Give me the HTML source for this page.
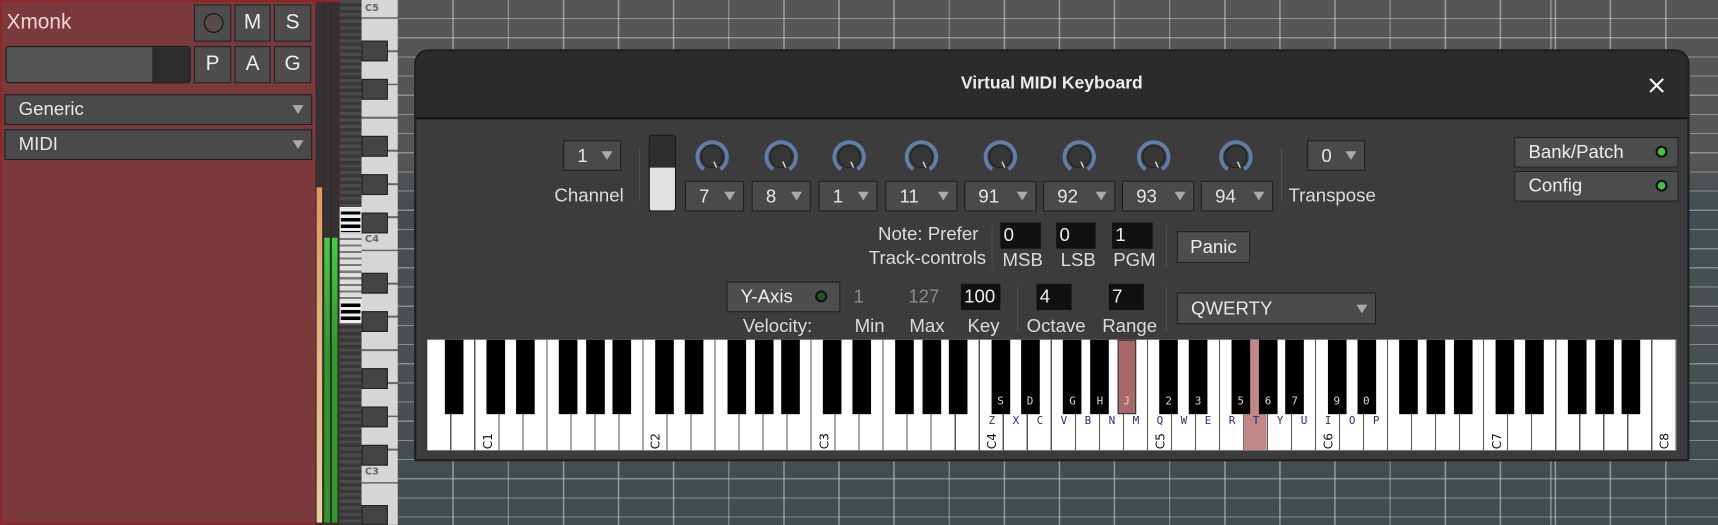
<!DOCTYPE html>
<html><head><meta charset="utf-8">
<style>
*{box-sizing:border-box;margin:0;padding:0}
html,body{width:1718px;height:525px;overflow:hidden;background:#4a5053}
#w{position:absolute;left:0;top:0;width:1568px;height:479px;transform:scale(1.09566);transform-origin:0 0;font-family:"Liberation Sans","DejaVu Sans",sans-serif;color:#e2e2e2}
.a{position:absolute}
#grid{left:363px;top:0;width:1205px;height:479px;
background:
repeating-linear-gradient(90deg,transparent 0 49px,rgba(215,215,215,.55) 49px 50.3px),
repeating-linear-gradient(180deg,transparent 0 16.4px,rgba(215,215,215,.45) 16.4px 17.5px),
linear-gradient(180deg,#555756 0,#555756 30%,#434c50 40%,#4b5153 60%,#434b4f 100%);
background-position:1px 0,0 0,0 0}
#red{left:0;top:0;width:310px;height:479px;background:#7a3a3c;border:2px solid #8e2828}
.btn{position:absolute;background:#4d4d4d;border:1px solid #222;color:#eee;font-size:19px;text-align:center;line-height:32px}
.dd{position:absolute;background:#4a4a4a;border:1px solid #1e1e1e;color:#e6e6e6;font-size:17px;padding-left:12px}
.dd:after{content:"";position:absolute;right:7px;top:50%;margin-top:-4px;border-left:5px solid transparent;border-right:5px solid transparent;border-top:8px solid #aaa}
.lbl{position:absolute;font-size:17px;color:#dcdcdc;white-space:nowrap}
.sep{position:absolute;width:1px;background:#1e1e1e;border-right:1px solid #555}
.spin{position:absolute;background:#111;color:#eee;font-size:17px;padding-left:3px;line-height:24px;height:24px}
.led{position:absolute;width:11px;height:11px;border-radius:50%;background:#3ec43e;border:2px solid #111}
.bk{position:absolute;top:0;width:17px;height:68px;background:#000}
.wl{position:absolute;top:69px;width:22px;text-align:center;font-family:"DejaVu Sans Mono","Liberation Mono",monospace;font-size:10px;color:#2a2a80}
.bl{position:absolute;top:51px;width:17px;text-align:center;font-family:"DejaVu Sans Mono","Liberation Mono",monospace;font-size:10px;color:#e8dca0}
.ol{position:absolute;top:84px;font-size:11px;color:#111;transform:rotate(-90deg);transform-origin:0 0;width:20px;font-family:"DejaVu Sans","Liberation Sans",sans-serif}
</style></head><body><div id="w">
<div class="a" id="grid"></div>
<div class="a" style="left:1415px;top:0;width:1px;height:479px;background:rgba(230,230,230,.6)"></div>

<div class="a" id="red"></div>
<div class="lbl" style="left:6px;top:10px;font-size:19px;color:#f2d6d6">Xmonk</div>
<div class="btn" style="left:177px;top:4px;width:34px;height:34px"><div class="a" style="left:8px;top:7px;width:18px;height:18px;border-radius:50%;border:1px solid #111;background:#5a4a4a"></div></div>
<div class="btn" style="left:214px;top:4px;width:33px;height:34px">M</div>
<div class="btn" style="left:250px;top:4px;width:34px;height:34px">S</div>
<div class="btn" style="left:177px;top:42px;width:34px;height:34px">P</div>
<div class="btn" style="left:214px;top:42px;width:33px;height:34px">A</div>
<div class="btn" style="left:250px;top:42px;width:34px;height:34px">G</div>
<div class="a" style="left:5px;top:42px;width:169px;height:34px;background:#555;border:1px solid #1a1a1a;border-radius:3px;overflow:hidden"><div class="a" style="left:133px;top:0;width:36px;height:34px;background:#2c2c2c"></div></div>
<div class="dd" style="left:4px;top:86px;width:281px;height:28px;line-height:26px;padding-left:12px">Generic</div>
<div class="dd" style="left:4px;top:118px;width:281px;height:28px;line-height:26px;padding-left:12px">MIDI</div>
<div class="a" style="left:288px;top:2px;width:22px;height:477px;background:#3a2a2a"></div>
<div class="a" style="left:289px;top:3px;width:5px;height:474px;background:#333"></div>
<div class="a" style="left:289px;top:171px;width:5px;height:306px;background:linear-gradient(#e09a60,#e8d0a0)"></div>
<div class="a" style="left:296px;top:3px;width:5px;height:474px;background:#333"></div>
<div class="a" style="left:296px;top:217px;width:5px;height:260px;background:linear-gradient(#40d040,#2a9a2a 40%,#2a9a2a)"></div>
<div class="a" style="left:303px;top:3px;width:5px;height:474px;background:#333"></div>
<div class="a" style="left:303px;top:217px;width:5px;height:260px;background:linear-gradient(#40d040,#2a9a2a 40%,#2a9a2a)"></div>
<div class="a" style="left:310px;top:0;width:20px;height:479px;background:repeating-linear-gradient(180deg,#4a4a4a 0 3px,#383838 3px 6px)"></div>
<div class="a" style="left:310px;top:189px;width:20px;height:24px;background:repeating-linear-gradient(180deg,#eee 0 3px,#000 3px 6px);border:1px solid #fff"></div>
<div class="a" style="left:310px;top:213px;width:20px;height:60px;background:repeating-linear-gradient(180deg,#ddd 0 4px,#777 4px 6px)"></div>
<div class="a" style="left:310px;top:273px;width:20px;height:22px;background:repeating-linear-gradient(180deg,#eee 0 3px,#000 3px 6px);border:1px solid #fff"></div>
<div class="a" style="left:330px;top:0;width:33px;height:479px;background:repeating-linear-gradient(180deg,#d6d6d6 0 28.6px,#666 28.6px 30.3px);background-position:0 -13px"></div>
<div class="a" style="left:330px;top:3px;width:33px;height:14px;font:bold 9px 'DejaVu Sans',sans-serif;color:#666;padding-left:3px">C5</div>
<div class="a" style="left:330px;top:214px;width:33px;height:14px;font:bold 9px 'DejaVu Sans',sans-serif;color:#666;padding-left:3px">C4</div>
<div class="a" style="left:330px;top:426px;width:33px;height:14px;font:bold 9px 'DejaVu Sans',sans-serif;color:#666;padding-left:3px">C3</div>
<div class="a" style="left:330px;top:37px;width:24px;height:19px;background:#444;border:1px solid #222"></div>
<div class="a" style="left:330px;top:72px;width:24px;height:19px;background:#444;border:1px solid #222"></div>
<div class="a" style="left:330px;top:124px;width:24px;height:19px;background:#444;border:1px solid #222"></div>
<div class="a" style="left:330px;top:159px;width:24px;height:19px;background:#444;border:1px solid #222"></div>
<div class="a" style="left:330px;top:194px;width:24px;height:19px;background:#444;border:1px solid #222"></div>
<div class="a" style="left:330px;top:249px;width:24px;height:19px;background:#444;border:1px solid #222"></div>
<div class="a" style="left:330px;top:284px;width:24px;height:19px;background:#444;border:1px solid #222"></div>
<div class="a" style="left:330px;top:336px;width:24px;height:19px;background:#444;border:1px solid #222"></div>
<div class="a" style="left:330px;top:371px;width:24px;height:19px;background:#444;border:1px solid #222"></div>
<div class="a" style="left:330px;top:406px;width:24px;height:19px;background:#444;border:1px solid #222"></div>
<div class="a" style="left:330px;top:461px;width:24px;height:18px;background:#444;border:1px solid #222"></div>

<div class="a" style="left:378px;top:45px;width:1164px;height:376px;background:#3c3c3c;border:2px solid #1f1f1f;border-radius:13px 13px 2px 2px;overflow:hidden">
 <div class="a" style="left:0;top:0;width:1164px;height:62px;background:#2b2b2b;border-bottom:2px solid #161616"></div>
</div>
<div class="lbl" style="left:780px;top:68px;width:360px;text-align:center;font-weight:bold;font-size:16px;color:#ececec">Virtual MIDI Keyboard</div>
<svg class="a" style="left:1504px;top:70px" width="16" height="16" viewBox="0 0 16 16"><path d="M2 2L14 14M14 2L2 14" stroke="#f2f2f2" stroke-width="2"/></svg>

<div class="dd" style="left:514px;top:128px;width:53px;height:28px;line-height:27px">1</div>
<div class="lbl" style="left:506px;top:169px">Channel</div>
<div class="sep" style="left:583px;top:134px;height:50px"></div>
<div class="a" style="left:592px;top:123px;width:25px;height:70px;background:#2e2e2e;border:1px solid #1a1a1a;border-radius:3px;overflow:hidden"><div class="a" style="left:0;top:29px;width:25px;height:41px;background:#e2e2e2"></div></div>

<svg class="a" style="left:620px;top:124px" width="560" height="40">
<defs><g id="kn"><path d="M-7.5 11.5A13.5 13.5 0 1 1 7.5 11.5" fill="none" stroke="#5f7fa8" stroke-width="3.5"/><circle r="10" fill="#363636" stroke="#222"/><path d="M1.5 4.5L4 10" stroke="#ddd" stroke-width="1.3"/></g></defs>
<use href="#kn" x="30" y="19"/><use href="#kn" x="93" y="19"/><use href="#kn" x="155" y="19"/><use href="#kn" x="221" y="19"/><use href="#kn" x="293" y="19"/><use href="#kn" x="365" y="19"/><use href="#kn" x="433" y="19"/><use href="#kn" x="508" y="19"/>
</svg>
<div class="dd" style="left:625px;top:165px;width:54px;height:28px;line-height:27px">7</div>
<div class="dd" style="left:686px;top:165px;width:54px;height:28px;line-height:27px">8</div>
<div class="dd" style="left:747px;top:165px;width:54px;height:28px;line-height:27px">1</div>
<div class="dd" style="left:808px;top:165px;width:66px;height:28px;line-height:27px">11</div>
<div class="dd" style="left:880px;top:165px;width:66px;height:28px;line-height:27px">91</div>
<div class="dd" style="left:952px;top:165px;width:66px;height:28px;line-height:27px">92</div>
<div class="dd" style="left:1024px;top:165px;width:66px;height:28px;line-height:27px">93</div>
<div class="dd" style="left:1096px;top:165px;width:66px;height:28px;line-height:27px">94</div>
<div class="sep" style="left:1169px;top:134px;height:50px"></div>
<div class="dd" style="left:1193px;top:128px;width:53px;height:28px;line-height:27px">0</div>
<div class="lbl" style="left:1176px;top:169px">Transpose</div>

<div class="btn" style="left:1382px;top:125px;width:150px;height:28px;line-height:26px;text-align:left;padding-left:12px;font-size:17px">Bank/Patch</div>
<div class="led" style="left:1511px;top:133px"></div>
<div class="btn" style="left:1382px;top:156px;width:150px;height:28px;line-height:26px;text-align:left;padding-left:12px;font-size:17px">Config</div>
<div class="led" style="left:1511px;top:164px"></div>

<div class="lbl" style="left:760px;top:204px;width:133px;text-align:right">Note: Prefer</div>
<div class="lbl" style="left:760px;top:226px;width:140px;text-align:right">Track-controls</div>
<div class="sep" style="left:905px;top:205px;height:40px"></div>
<div class="spin" style="left:913px;top:203px;width:37px">0</div>
<div class="spin" style="left:964px;top:203px;width:36px">0</div>
<div class="spin" style="left:1015px;top:203px;width:37px">1</div>
<div class="lbl" style="left:915px;top:228px">MSB</div>
<div class="lbl" style="left:968px;top:228px">LSB</div>
<div class="lbl" style="left:1016px;top:228px">PGM</div>
<div class="sep" style="left:1064px;top:205px;height:40px"></div>
<div class="btn" style="left:1074px;top:211px;width:67px;height:29px;line-height:27px;font-size:17px">Panic</div>

<div class="btn" style="left:663px;top:257px;width:104px;height:28px;line-height:26px;text-align:left;padding-left:12px;font-size:17px">Y-Axis</div>
<div class="led" style="left:744px;top:265px;background:#1d5a1d"></div>
<div class="lbl" style="left:779px;top:261px;color:#8a8a8a">1</div>
<div class="lbl" style="left:829px;top:261px;color:#8a8a8a">127</div>
<div class="spin" style="left:877px;top:259px;width:36px">100</div>
<div class="lbl" style="left:678px;top:288px">Velocity:</div>
<div class="lbl" style="left:780px;top:288px">Min</div>
<div class="lbl" style="left:830px;top:288px">Max</div>
<div class="lbl" style="left:883px;top:288px">Key</div>
<div class="sep" style="left:928px;top:262px;height:40px"></div>
<div class="spin" style="left:946px;top:259px;width:32px">4</div>
<div class="spin" style="left:1012px;top:259px;width:32px">7</div>
<div class="lbl" style="left:937px;top:288px">Octave</div>
<div class="lbl" style="left:1006px;top:288px">Range</div>
<div class="sep" style="left:1064px;top:262px;height:40px"></div>
<div class="dd" style="left:1074px;top:267px;width:182px;height:29px;line-height:28px">QWERTY</div>

<div class="a" style="left:390px;top:310px;width:1140px;height:101px;background:#fff;overflow:hidden">
 <div class="a" style="left:0;top:0;width:1140px;height:101px;background:repeating-linear-gradient(90deg,transparent 0 20.92px,#555 20.92px 21.923px)"></div>
 <div class="a" style="left:745.4px;top:0;width:21px;height:101px;background:#c08888"></div>
 <div class="bk" style="left:15.7px"></div>
 <div class="bk" style="left:54.3px"></div><div class="bk" style="left:81.2px"></div><div class="bk" style="left:120px"></div><div class="bk" style="left:145px"></div><div class="bk" style="left:169.4px"></div>
 <div class="bk" style="left:207.8px"></div><div class="bk" style="left:234.7px"></div><div class="bk" style="left:273.5px"></div><div class="bk" style="left:298.5px"></div><div class="bk" style="left:322.8px"></div>
 <div class="bk" style="left:361.2px"></div><div class="bk" style="left:388.1px"></div><div class="bk" style="left:427px"></div><div class="bk" style="left:451.9px"></div><div class="bk" style="left:476.3px"></div>
 <div class="bk" style="left:514.7px"></div><div class="bk" style="left:541.6px"></div><div class="bk" style="left:580.4px"></div><div class="bk" style="left:605.4px"></div><div class="bk" style="left:629.8px;background:#a86868;border:1px solid #333"></div>
 <div class="bk" style="left:668.1px"></div><div class="bk" style="left:695px"></div><div class="bk" style="left:733.9px"></div><div class="bk" style="left:758.8px"></div><div class="bk" style="left:783.2px"></div>
 <div class="bk" style="left:821.6px"></div><div class="bk" style="left:848.5px"></div><div class="bk" style="left:887.3px"></div><div class="bk" style="left:912.3px"></div><div class="bk" style="left:936.7px"></div>
 <div class="bk" style="left:975.1px"></div><div class="bk" style="left:1002px"></div><div class="bk" style="left:1040.8px"></div><div class="bk" style="left:1065.8px"></div><div class="bk" style="left:1090.2px"></div>
 <div class="bl" style="left:514.7px">S</div><div class="bl" style="left:541.6px">D</div><div class="bl" style="left:580.4px">G</div><div class="bl" style="left:605.4px">H</div><div class="bl" style="left:629.8px">J</div>
 <div class="bl" style="left:668.1px">2</div><div class="bl" style="left:695px">3</div><div class="bl" style="left:733.9px">5</div><div class="bl" style="left:758.8px">6</div><div class="bl" style="left:783.2px">7</div>
 <div class="bl" style="left:821.6px">9</div><div class="bl" style="left:848.5px">0</div>
 <div class="wl" style="left:504.2px">Z</div><div class="wl" style="left:526.2px">X</div><div class="wl" style="left:548.1px">C</div><div class="wl" style="left:570px">V</div><div class="wl" style="left:592px">B</div><div class="wl" style="left:613.8px">N</div><div class="wl" style="left:635.8px">M</div>
 <div class="wl" style="left:657.7px">Q</div><div class="wl" style="left:679.6px">W</div><div class="wl" style="left:701.5px">E</div><div class="wl" style="left:723.5px">R</div><div class="wl" style="left:745.4px">T</div><div class="wl" style="left:767.3px">Y</div><div class="wl" style="left:789.2px">U</div>
 <div class="wl" style="left:811.2px">I</div><div class="wl" style="left:833.1px">O</div><div class="wl" style="left:855px">P</div>
 <div class="ol" style="left:49px;top:100px">C1</div>
 <div class="ol" style="left:202px;top:100px">C2</div>
 <div class="ol" style="left:356px;top:100px">C3</div>
 <div class="ol" style="left:509px;top:100px">C4</div>
 <div class="ol" style="left:663px;top:100px">C5</div>
 <div class="ol" style="left:816px;top:100px">C6</div>
 <div class="ol" style="left:970px;top:100px">C7</div>
 <div class="ol" style="left:1123px;top:100px">C8</div>
</div>
</div></body></html>
